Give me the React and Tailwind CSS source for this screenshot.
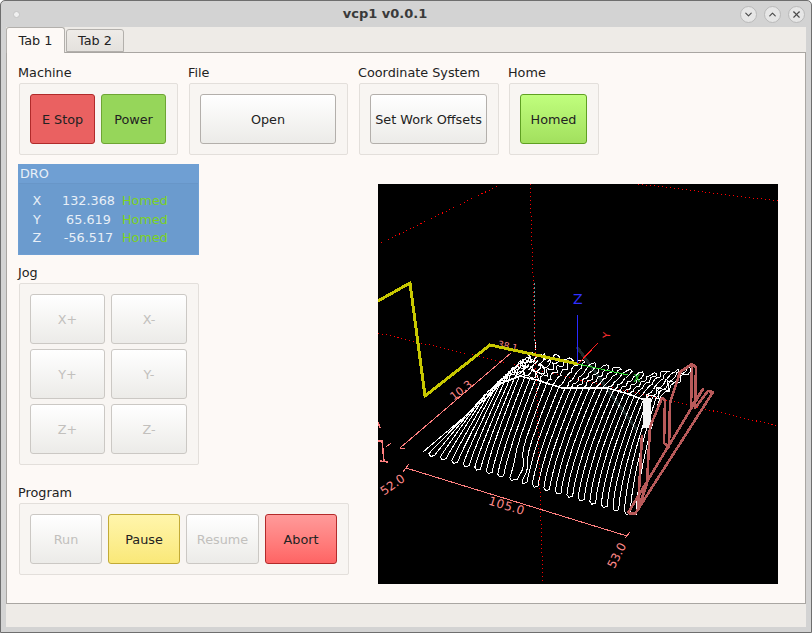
import React from "react";
import { ChevronDown, ChevronUp, X } from "lucide-react";

const gauss = (x, c, s) => Math.exp(-(((x - c) / s) ** 2));

// read off the picture: where each pass crosses the ridge and where it ends at the back
const ridge = [
  [470, 412], [487, 392], [502, 382], [520, 376], [540, 380], [562, 388],
  [585, 387], [608, 388], [628, 393], [645, 400], [660, 398],
];
const back = [
  [490, 395], [505, 378], [520, 362], [535, 354], [558, 357], [582, 362],
  [604, 366], [626, 370], [648, 375], [670, 372], [692, 368],
];

const lookup = (table, u) => {
  const p = Math.min(9.999, u * 10);
  const k = Math.floor(p);
  const f = p - k;
  return [
    table[k][0] + (table[k + 1][0] - table[k][0]) * f,
    table[k][1] + (table[k + 1][1] - table[k][1]) * f,
  ];
};

const front = (u) => [423 + 213 * u, 452 + 63 * u];

// t runs 0..1 from the front edge to the ridge, 1..2 from the ridge to the back
const surface = (u, t, i) => {
  const [fx, fy] = front(u);
  const [rx, ry] = lookup(ridge, u);
  const [bx, by] = lookup(back, u);
  let x;
  let y;
  if (t <= 1) {
    x = fx + (rx - fx) * t ** (1 + 0.5 * u);
    y = fy + (ry - fy) * t;
    x += 6 * gauss(u, 0.44, 0.03) * gauss(t, 0.12, 0.12);
  } else {
    x = rx + (bx - rx) * (t - 1);
    y = ry + (by - ry) * (t - 1);
    const wob = 0.8 + 2.4 * gauss(u, 0.3, 0.14) + 1.2 * gauss(u, 0.95, 0.08);
    x += Math.sin(i * 2.3 + t * 19) * wob;
    y += Math.cos(i * 1.4 + t * 23) * wob;
  }
  return `${x.toFixed(1)},${y.toFixed(1)}`;
};

// serpentine tool path, one pass per line with a small turn at each end
const buildToolpath = () => {
  const lines = 38;
  const pts = [];
  for (let i = 0; i < lines; i++) {
    const u = i / (lines - 1);
    for (let s = 0; s <= 40; s++) {
      const t = (s / 40) * 2;
      pts.push(surface(u, i % 2 === 0 ? t : 2 - t, i));
    }
    if (i < lines - 1) {
      const mid = (i + 0.5) / (lines - 1);
      if (i % 2 === 0) {
        const [bx, by] = lookup(back, mid);
        pts.push(`${(bx + 1).toFixed(1)},${(by - 1.5).toFixed(1)}`);
      } else {
        const [fx, fy] = front(mid);
        pts.push(`${(fx - 1).toFixed(1)},${(fy + 2).toFixed(1)}`);
      }
    }
  }
  return pts.join(" ");
};

const toolpath = buildToolpath();
const ridgeLine = ridge.slice(1, 10).map(([x, y], i) => `${x},${y + (i % 2)}`).join(" ");

const Viewport = () => (
  <svg
    viewBox="378 184 400 400"
    className="w-[400px] h-[400px] bg-black shrink-0 ml-[28px] mt-[29px]"
    shapeRendering="crispEdges"
    fill="none"
  >
    {/* limits */}
    <g stroke="#ff0000" strokeDasharray="1 3">
      <path d="M381 243 L502 184" />
      <path d="M638 184 L778 201" />
      <path d="M378 333 L778 426" />
    </g>
    <path d="M534.5 283 L535 342" stroke="#5f9ea0" strokeDasharray="2 2" />
    <path d="M535 342 L536 350" stroke="#ffffff" />

    {/* dimensions */}
    <g stroke="#ff7f7f">
      <path d="M406 468 L627 536 M403 472 L409 464 M625 538 L630 532" />
      <path d="M400 448 L511 353 M400 448 L405 449 M386 447 L391 443" />
      <path d="M382 440 L384 462 M378 441 L383 441 M380 461 L388 462 M378 422 L380 428" strokeWidth="1.6" />
    </g>
    <g fill="#ff8a8a" fontFamily="'DejaVu Sans', sans-serif" fontSize="12" shapeRendering="auto">
      <text x="507" y="510" textAnchor="middle" transform="rotate(17 507 505)" letterSpacing="0.6">105.0</text>
      <text x="616" y="560" textAnchor="middle" transform="rotate(-62 616 555)">53.0</text>
      <text x="392" y="489" textAnchor="middle" transform="rotate(-35 392 484)">52.0</text>
      <text x="461" y="394" textAnchor="middle" fontSize="11" transform="rotate(-38 461 390)">10.3</text>
      <text x="508" y="349" textAnchor="middle" fontSize="9" transform="rotate(13 508 345)">38.1</text>
    </g>

    <path d="M577 347 L637 430" stroke="#1d2b2a" strokeWidth="3" />
    <polyline points={toolpath} stroke="#ffffff" strokeLinejoin="round" />
    <polyline points={ridgeLine} stroke="#ffffff" strokeWidth="1.6" />
    <path d="M530 184 L543 584" stroke="#ff0000" strokeDasharray="1 3" />

    {/* rapid moves and axes */}
    <path d="M378 301 L410 283 L425 396 L490 345 L578 364" stroke="#c8c800" strokeWidth="3" />
    <path d="M578 364 L628 375" stroke="#33dd33" />
    <path d="M577 315 L577 363" stroke="#2a2aff" />
    <path d="M578 364 L598 343" stroke="#ff2020" />
    <g fontFamily="'DejaVu Sans', sans-serif" shapeRendering="auto">
      <text x="573" y="304" fontSize="14" fill="#3030ff">Z</text>
      <text x="606" y="339" fontSize="10" fill="#ff3030" textAnchor="middle" transform="rotate(-85 606 335)">Y</text>
      <text x="637" y="382" fontSize="10" fill="#33dd33" textAnchor="middle">X</text>
    </g>

    {/* spindle dwell and the pink outline pass */}
    <rect x="643" y="398" width="8" height="30" fill="#f4f4f4" />
    <g stroke="#b85a5a" strokeWidth="2.6" strokeLinejoin="round">
      <polyline points="628,513 703,389 691,407 692,364" />
      <polyline points="628,513 635,514 713,392 708,391 695,408 696,367 692,364 680,372 670,403 669,447 664,443 665,400 662,398 650,427 647,483 638,510 642,435" />
    </g>
  </svg>
);

const btnTone = {
  normal: "border-[#b3afab] bg-linear-to-b from-[#ffffff] to-[#ecebe8] text-[#222]",
  disabled: "border-[#cbc8c4] bg-linear-to-b from-[#ffffff] to-[#ecebe8] text-[#c2c0bd]",
  estop: "border-[#b02a2a] bg-[#ea6161] text-[#222]",
  power: "border-[#6ea534] bg-[#96d65a] text-[#222]",
  homed: "border-[#5fa022] bg-linear-to-b from-[#c0fe7d] to-[#a2e05e] text-[#222]",
  pause: "border-[#c2aa36] bg-linear-to-b from-[#fff5ab] to-[#fae878] text-[#222]",
  abort: "border-[#b32a2a] bg-linear-to-b from-[#ff9a9a] to-[#fe6464] text-[#222]",
};

const Btn = ({ tone = "normal", className = "", children }) => (
  <button className={`h-[50px] pt-[2px] rounded-[3px] border flex items-center justify-center ${btnTone[tone]} ${className}`}>
    {children}
  </button>
);

const Group = ({ title, className = "", children }) => (
  <div>
    <div className="h-[18px] leading-[16px]">{title}</div>
    <div className={`rounded-[2px] border border-[#e3dfdb] bg-[#f8f5f2] pl-[10px] pt-[10px] ${className}`}>
      {children}
    </div>
  </div>
);

const WinBtn = ({ children }) => (
  <div className="w-[17px] h-[17px] rounded-full border border-[#b9b9b9] bg-[#e6e6e6] flex items-center justify-center text-[#4a4a4a]">
    {children}
  </div>
);

const droRows = [
  ["X", "132.368"],
  ["Y", "65.619"],
  ["Z", "-56.517"],
];

export default function App() {
  return (
    <div
      className="w-[812px] h-[633px] flex flex-col overflow-hidden rounded-t-[5px] border border-[#6e6e6e] bg-[#d3d3d3] text-[12.8px] text-[#222]"
      style={{ fontFamily: "'DejaVu Sans', sans-serif" }}
    >
      {/* title bar */}
      <div className="h-[26px] shrink-0 flex items-center">
        <div className="w-[29px] pl-[12px]">
          <div className="w-[7px] h-[7px] rounded-full bg-[#f0f0f0] border border-[#c4c4c4]" />
        </div>
        <div className="flex-1 text-center text-[13px] font-bold text-[#3a3a3a]">vcp1 v0.0.1</div>
        <div className="w-[71px] flex gap-[7px]">
          <WinBtn><ChevronDown size={11} strokeWidth={2.5} /></WinBtn>
          <WinBtn><ChevronUp size={11} strokeWidth={2.5} /></WinBtn>
          <WinBtn><X size={11} strokeWidth={2.5} /></WinBtn>
        </div>
      </div>

      <div className="mx-[5px] w-[800px] flex flex-col bg-[#eeebe7]">
        {/* tabs */}
        <div className="h-[25px] flex items-end relative z-10">
          <div className="w-[59px] h-[26px] -mb-px rounded-t-[3px] border border-b-0 border-[#b3b0ac] bg-[#fdf9f6] flex items-center justify-center">
            Tab 1
          </div>
          <div className="w-[58px] h-[23px] ml-px pt-px rounded-t-[3px] border border-[#b3b0ac] bg-linear-to-b from-[#efece8] to-[#e4e1dd] flex items-center justify-center">
            Tab 2
          </div>
        </div>

        <div className="h-[552px] border border-[#a9a6a2] bg-[#fdf9f6] pl-[11px] pt-[12px]">
          <div className="flex">
            <Group title="Machine" className="ml-px w-[159px] h-[72px] flex gap-[6px]">
              <Btn tone="estop" className="w-[65px]">E Stop</Btn>
              <Btn tone="power" className="w-[65px]">Power</Btn>
            </Group>
            <div className="ml-[10px]">
              <Group title="File" className="ml-px w-[159px] h-[72px]">
                <Btn className="w-[136px]">Open</Btn>
              </Group>
            </div>
            <div className="ml-[10px]">
              <Group title="Coordinate System" className="ml-px w-[140px] h-[72px]">
                <Btn className="w-[117px]">Set Work Offsets</Btn>
              </Group>
            </div>
            <div className="ml-[9px]">
              <Group title="Home" className="ml-px w-[90px] h-[72px]">
                <Btn tone="homed" className="w-[67px]">Homed</Btn>
              </Group>
            </div>
          </div>

          <div className="flex">
            <div className="w-[332px] shrink-0 pt-[9px]">
              <div className="w-[181px] h-[91px] bg-[#6f9fd3] text-[#e8eff7]">
                <div className="h-[19px] pl-[2px] leading-[19px]">DRO</div>
                <div className="mx-px h-[71px] border-t border-[#6896c8] bg-[#6b9bce] pt-[7px]">
                  {droRows.map(([axis, value]) => (
                    <div key={axis} className="h-[18.5px] grid grid-cols-[36px_67px_auto] items-center">
                      <div className="text-center">{axis}</div>
                      <div className="text-center">{value}</div>
                      <div className="text-[#7dd31f]">Homed</div>
                    </div>
                  ))}
                </div>
              </div>

              <div className="mt-[10px]">
                <Group title="Jog" className="ml-px w-[180px] h-[182px] grid grid-cols-[75px_76px] auto-rows-[50px] gap-x-[6px] gap-y-[5px]">
                  {["X+", "X-", "Y+", "Y-", "Z+", "Z-"].map((j) => (
                    <Btn key={j} tone="disabled">{j}</Btn>
                  ))}
                </Group>
              </div>

              <div className="mt-[20px]">
                <Group title="Program" className="ml-px w-[330px] h-[72px] flex gap-[6px]">
                  <Btn tone="disabled" className="w-[72px]">Run</Btn>
                  <Btn tone="pause" className="w-[72px]">Pause</Btn>
                  <Btn tone="disabled" className="w-[73px]">Resume</Btn>
                  <Btn tone="abort" className="w-[72px]">Abort</Btn>
                </Group>
              </div>
            </div>

            <Viewport />
          </div>
        </div>

        {/* status bar */}
        <div className="h-[23px]" />
      </div>
    </div>
  );
}
